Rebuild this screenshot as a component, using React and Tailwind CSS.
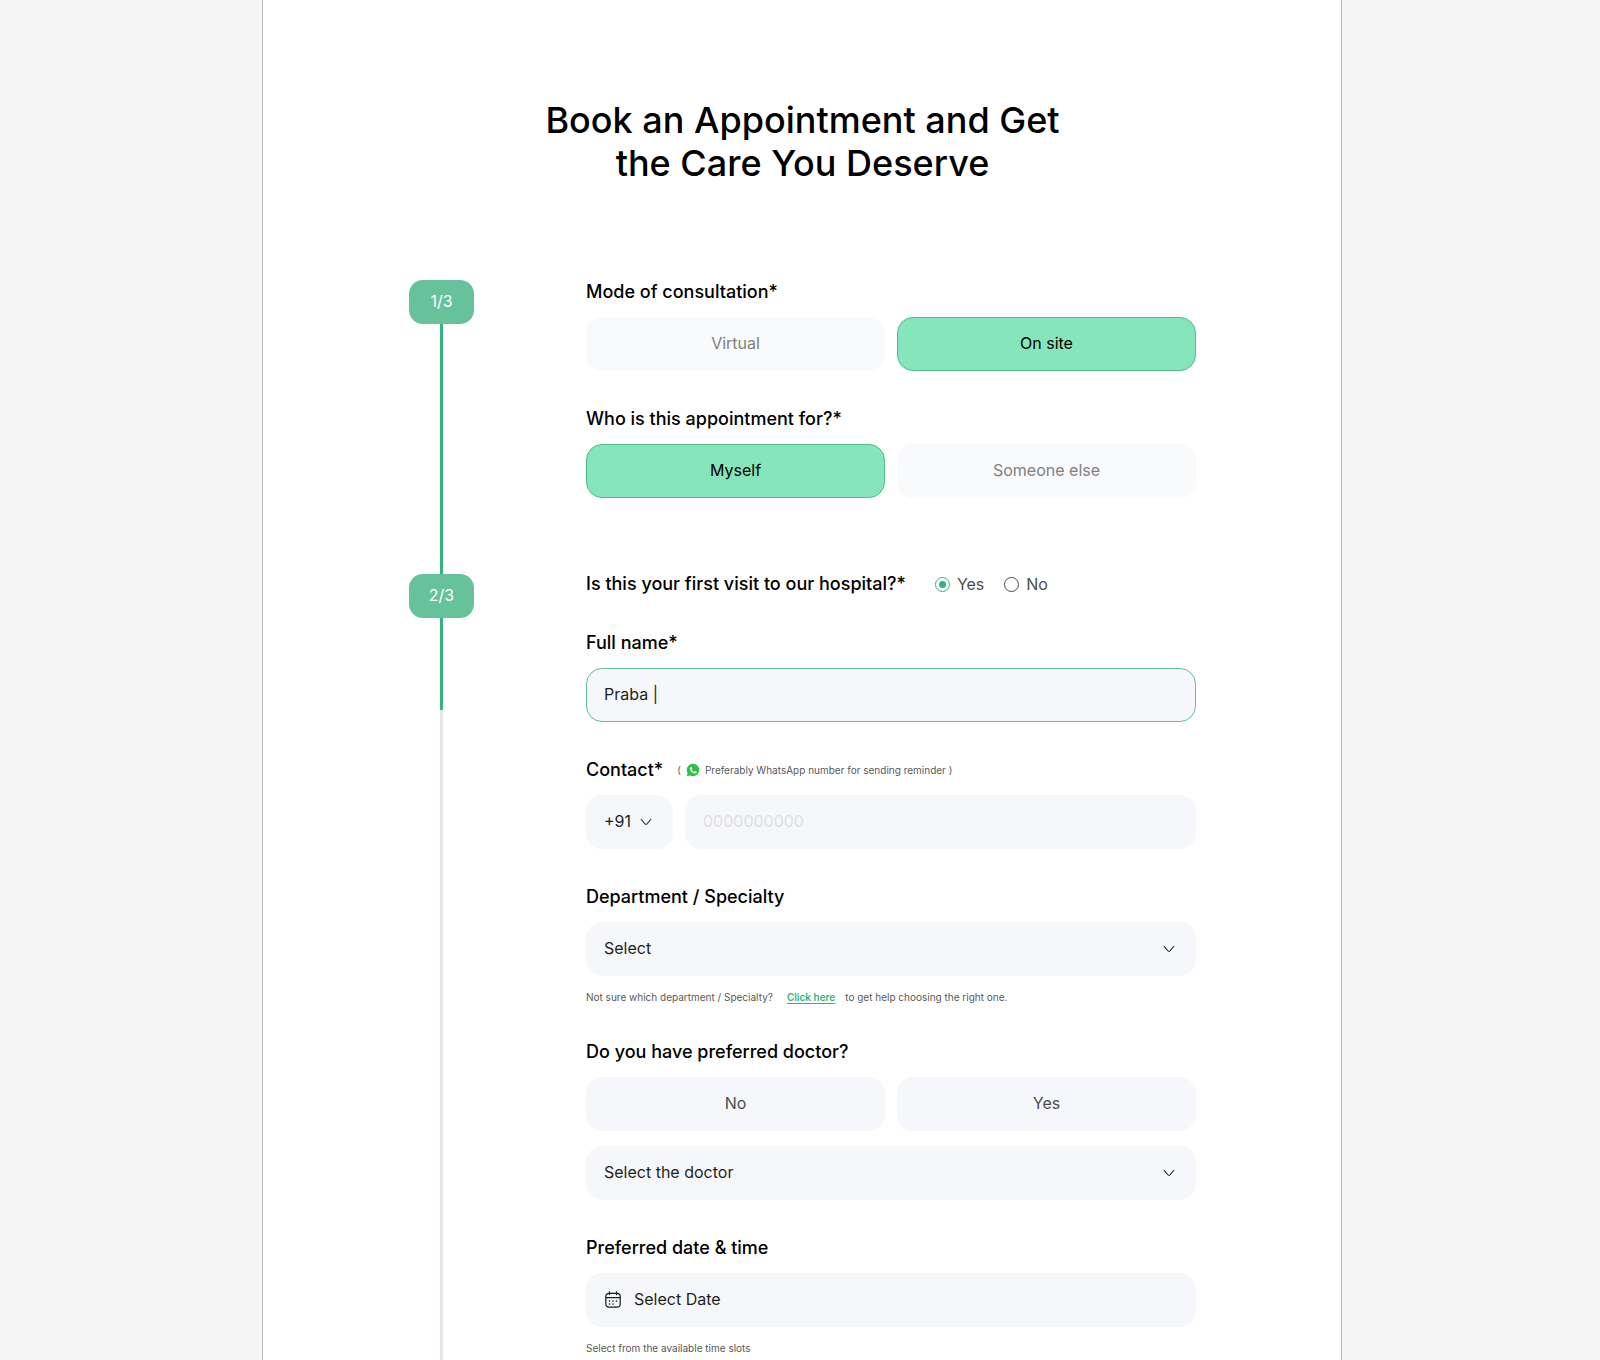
import React, { useState } from "react";

const field =
  "h-[54px] w-full rounded-[16px] bg-[#f5f7fb] pb-[2px] text-base text-[#1f1f1f] outline-none";

function Label({ htmlFor, children }) {
  return (
    <label htmlFor={htmlFor} className="block text-[18px] leading-[24px] font-medium text-black">
      {children}
    </label>
  );
}

function Chevron() {
  return (
    <svg
      viewBox="0 0 12 8"
      className="pointer-events-none absolute top-[23px] right-[21px] h-[8px] w-[12px]"
      fill="none"
      stroke="#3a3a3a"
      strokeWidth="1.1"
      strokeLinecap="round"
      strokeLinejoin="round"
      aria-hidden="true"
    >
      <path d="M1.2 1.4 L5 5.8 Q6 6.8 7 5.8 L10.8 1.4" />
    </svg>
  );
}

function Choice({ label, options, value, onChange, idle }) {
  return (
    <div role="group" aria-label={label} className="grid grid-cols-2 gap-3">
      {options.map((o) => (
        <button
          key={o}
          type="button"
          aria-pressed={value === o}
          onClick={() => onChange(o)}
          className={
            value === o
              ? "h-[54px] rounded-[16px] border border-[#4fbd8b] bg-[#86e5bb] pb-[2px] text-base text-black"
              : "h-[54px] rounded-[16px] pb-[2px] text-base " + idle
          }
        >
          {o}
        </button>
      ))}
    </div>
  );
}

function Group({ label, children }) {
  return (
    <div className="flex flex-col gap-[13px]">
      <p className="text-[18px] leading-[24px] font-medium text-black">{label}</p>
      <div className="flex flex-col gap-[15px]">{children}</div>
    </div>
  );
}

function Step({ children }) {
  return (
    <div className="flex h-[44px] w-[65px] shrink-0 items-center justify-center rounded-[14px] bg-[#66c29a] pb-[2px] text-base text-white">
      {children}
    </div>
  );
}

function WhatsApp() {
  return (
    <svg viewBox="0 0 28 28" className="h-[14px] w-[14px]" aria-hidden="true">
      <path d="M1.4 26.6 L3.2 20.2 A12.5 12.5 0 1 1 8 24.9 Z" fill="#2fc144" />
      <path
        d="M10.6 8c.5 0 .8 0 1 .6l1 2.500c.1.4 0 .7-.2 1l-.9 1.100c-.2.2-.2.4 0 .7 1 1.800 2.400 3 4.300 3.800.3.1.5.1.7-.1l1.100-1.300c.3-.4.5-.4.9-.2l2.500 1.200c.5.2.6.4.5.9-.2 1.900-1.900 2.900-3.500 2.800-4.700-.6-9.300-4.800-10.200-9-.2-1.700.7-3.400 1.900-4z"
        fill="#fff"
      />
    </svg>
  );
}

function Calendar() {
  return (
    <svg
      viewBox="0 0 16 17"
      className="h-[17px] w-[16px]"
      fill="none"
      stroke="#1a1a1a"
      strokeWidth="1.2"
      strokeLinecap="round"
      aria-hidden="true"
    >
      <rect x="0.8" y="2.400" width="14.400" height="13.800" rx="3.200" />
      <path d="M1 6.600h14M4.500 0.800v2.800M11.500 0.800v2.800" />
      <path d="M4.400 10h.2M7.900 10h.2M11.400 10h.2M4.400 13h.2M7.900 13h.2" strokeWidth="1.400" />
    </svg>
  );
}

function Radio({ id, label, checked, onChange }) {
  return (
    <label htmlFor={id} className="flex items-center gap-[7px] text-base leading-[22px] text-[#4d4d4d]">
      <span className="relative flex h-[15px] w-[15px] items-center justify-center">
        <input
          id={id}
          type="radio"
          name="first-visit"
          checked={checked}
          onChange={onChange}
          className="peer h-[15px] w-[15px] appearance-none rounded-full border border-[#4d4d4d] checked:border-[#35b37e]"
        />
        <span className="pointer-events-none absolute top-[4px] left-[4px] hidden h-[7px] w-[7px] rounded-full bg-[#35b37e] peer-checked:block" />
      </span>
      {label}
    </label>
  );
}

export default function App() {
  const [mode, setMode] = useState("On site");
  const [who, setWho] = useState("Myself");
  const [first, setFirst] = useState("Yes");
  const [pref, setPref] = useState(null);
  const [name, setName] = useState("Praba |");
  const [phone, setPhone] = useState("");

  return (
    <div className="flex min-h-screen justify-center bg-[#f5f5f5] pl-1 font-['Inter',sans-serif]">
      <main className="flex w-full max-w-[1080px] flex-col border-x border-[#b8b8b8] bg-white px-6 pt-[99px] lg:pr-[145px] lg:pl-[146px]">
        <h1 className="mx-auto max-w-[560px] text-center text-[36px] leading-[43px] font-medium text-black">
          Book an Appointment and Get the Care You Deserve
        </h1>

        <div className="mt-[95px] flex grow gap-[112px]">
          <div className="flex shrink-0 flex-col items-center">
            <Step>1/3</Step>
            <div className="h-[250px] w-[3px] bg-[#35b37e]" />
            <Step>2/3</Step>
            <div className="h-[92px] w-[3px] bg-[#35b37e]" />
            <div className="w-[3px] grow bg-[#e4e6ed]" />
          </div>

          <form className="min-w-0 flex-1" onSubmit={(e) => e.preventDefault()}>
            <section className="flex flex-col gap-9">
              <Group label="Mode of consultation*">
                <Choice
                  label="Mode of consultation"
                  options={["Virtual", "On site"]}
                  value={mode}
                  onChange={setMode}
                  idle="bg-[#f9fafc] text-[#808080]"
                />
              </Group>
              <Group label="Who is this appointment for?*">
                <Choice
                  label="Who is this appointment for?"
                  options={["Myself", "Someone else"]}
                  value={who}
                  onChange={setWho}
                  idle="bg-[#f9fafc] text-[#808080]"
                />
              </Group>
            </section>

            <section className="mt-[75px] flex flex-col gap-9">
              <div role="radiogroup" aria-labelledby="visit" className="flex items-center">
                <p id="visit" className="mr-[29px] text-[18px] leading-[22px] font-medium text-black">
                  Is this your first visit to our hospital?*
                </p>
                <div className="flex gap-5">
                  <Radio id="visit-yes" label="Yes" checked={first === "Yes"} onChange={() => setFirst("Yes")} />
                  <Radio id="visit-no" label="No" checked={first === "No"} onChange={() => setFirst("No")} />
                </div>
              </div>

              <div className="flex flex-col gap-[13px]">
                <Label htmlFor="name">Full name*</Label>
                <input
                  id="name"
                  value={name}
                  onChange={(e) => setName(e.target.value)}
                  className={field + " border border-[#5fc096] px-[17px]"}
                />
              </div>

              <div className="flex flex-col gap-[13px]">
                <div className="flex items-center gap-[14px]">
                  <Label htmlFor="phone">Contact*</Label>
                  <span className="flex items-center gap-[5px] text-[10px] leading-[13px] text-[#595959]">
                    <span>(</span>
                    <WhatsApp />
                    <span>Preferably WhatsApp number for sending reminder )</span>
                  </span>
                </div>
                <div className="flex gap-3">
                  <div className="relative w-[87px] shrink-0">
                    <select aria-label="Country code" className={field + " appearance-none pl-[18px]"}>
                      <option>+91</option>
                    </select>
                    <Chevron />
                  </div>
                  <input
                    id="phone"
                    type="tel"
                    value={phone}
                    onChange={(e) => setPhone(e.target.value)}
                    placeholder="0000000000"
                    className={field + " px-[18px] placeholder:text-[#e0e0e0]"}
                  />
                </div>
              </div>

              <div className="flex flex-col gap-[13px]">
                <Label htmlFor="department">Department / Specialty</Label>
                <div className="flex flex-col gap-[15px]">
                  <div className="relative">
                    <select id="department" className={field + " appearance-none px-[18px]"}>
                      <option>Select</option>
                    </select>
                    <Chevron />
                  </div>
                  <p className="flex flex-wrap text-[10px] leading-[13px] text-[#595959]">
                    <span>Not sure which department / Specialty?</span>
                    <a
                      href="#help"
                      className="mr-[10px] ml-[14px] font-semibold text-[#35b37e] underline underline-offset-2"
                    >
                      Click here
                    </a>
                    <span>to get help choosing the right one.</span>
                  </p>
                </div>
              </div>

              <Group label="Do you have preferred doctor?">
                <Choice
                  label="Do you have preferred doctor?"
                  options={["No", "Yes"]}
                  value={pref}
                  onChange={setPref}
                  idle="bg-[#f5f7fb] text-[#4d4d4d]"
                />
                <div className="relative">
                  <select aria-label="Doctor" className={field + " appearance-none px-[18px]"}>
                    <option>Select the doctor</option>
                  </select>
                  <Chevron />
                </div>
              </Group>

              <Group label="Preferred date & time">
                <button type="button" className={field + " flex items-center gap-[13px] px-[19px]"}>
                  <Calendar />
                  Select Date
                </button>
                <p className="text-[10px] leading-[13px] text-[#595959]">Select from the available time slots</p>
              </Group>
            </section>
          </form>
        </div>
      </main>
    </div>
  );
}
